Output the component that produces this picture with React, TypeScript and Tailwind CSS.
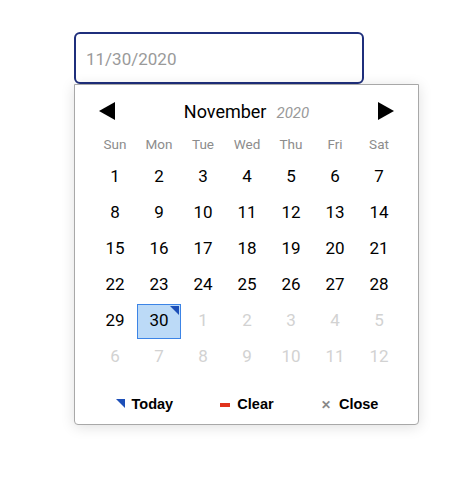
import React from 'react';

const DAY_NAMES = ['Sun', 'Mon', 'Tue', 'Wed', 'Thu', 'Fri', 'Sat'];

// 6 weeks shown for November 2020 (starts on a Sunday)
const CELLS: { day: number; current: boolean }[] = [
  ...Array.from({ length: 30 }, (_, i) => ({ day: i + 1, current: true })),
  ...Array.from({ length: 12 }, (_, i) => ({ day: i + 1, current: false })),
];

const SELECTED = 30;

export default function App() {
  return (
    <div className="min-h-[499px] bg-white pl-[74px] pt-[32px]" style={{ fontFamily: 'Roboto, "Noto Sans", sans-serif' }}>
      <div className="w-[290px] h-[52px] rounded-[6px] border-2 border-[#1f2f7c] bg-white flex items-center pl-[10px] pt-[4px]">
        <span className="text-[17px] text-[#9a9a9a]">11/30/2020</span>
      </div>

      <div className="w-[345px] h-[341px] border border-[#a8a8a8] rounded-b-[4px] bg-white shadow-[0_2px_14px_rgba(0,0,0,0.13)] pt-[8px]">
        {/* header */}
        <div className="h-[36px] flex items-center justify-between px-[24px]">
          <svg width="16" height="18" viewBox="0 0 16 18">
            <path d="M16 0 L0 9 L16 18 Z" fill="#000" />
          </svg>
          <div className="flex items-baseline gap-[10px]">
            <span className="text-[18px] text-black">November</span>
            <span className="text-[15px] text-[#999] italic">2020</span>
          </div>
          <svg width="16" height="18" viewBox="0 0 16 18">
            <path d="M0 0 L16 9 L0 18 Z" fill="#000" />
          </svg>
        </div>

        <div className="pl-[18px] w-[326px]">
          {/* day names */}
          <div className="grid grid-cols-7 h-[30px] items-center">
            {DAY_NAMES.map((d) => (
              <span key={d} className="text-center text-[13.5px] text-[#8c8c8c]">
                {d}
              </span>
            ))}
          </div>

          {/* days */}
          <div className="grid grid-cols-7 auto-rows-[36px]">
            {CELLS.map((c, idx) => {
              const selected = c.current && c.day === SELECTED;
              return (
                <div key={idx} className="flex items-center justify-center">
                  {selected ? (
                    <div className="relative w-[44px] h-[35px] border border-[#3c84e6] bg-[#bcdaf7] flex items-center justify-center text-[17px] text-black">
                      {c.day}
                      <span className="absolute top-[1px] right-[1px] w-0 h-0 border-t-[9px] border-l-[9px] border-t-[#1d4fb8] border-l-transparent" />
                    </div>
                  ) : (
                    <span className={`text-[17px] ${c.current ? 'text-black' : 'text-[#d2d2d2]'}`}>{c.day}</span>
                  )}
                </div>
              );
            })}
          </div>

          {/* footer */}
          <div
            className="grid grid-cols-3 h-[40px] mt-[10px] items-center text-[14.5px] font-bold text-black"
            style={{ fontFamily: '"Liberation Sans", Arial, sans-serif' }}
          >
            <div className="flex items-center justify-center gap-[7px]">
              <span className="w-0 h-0 border-t-[9px] border-l-[9px] border-t-[#1d4fb8] border-l-transparent -mt-[4px]" />
              <span>Today</span>
            </div>
            <div className="flex items-center justify-center gap-[7px]">
              <span className="w-[10px] h-[4px] bg-[#e0321c]" />
              <span>Clear</span>
            </div>
            <div className="flex items-center justify-center gap-[8px]">
              <span className="text-[12px] text-[#888] font-bold">✕</span>
              <span>Close</span>
            </div>
          </div>
        </div>
      </div>
    </div>
  );
}
